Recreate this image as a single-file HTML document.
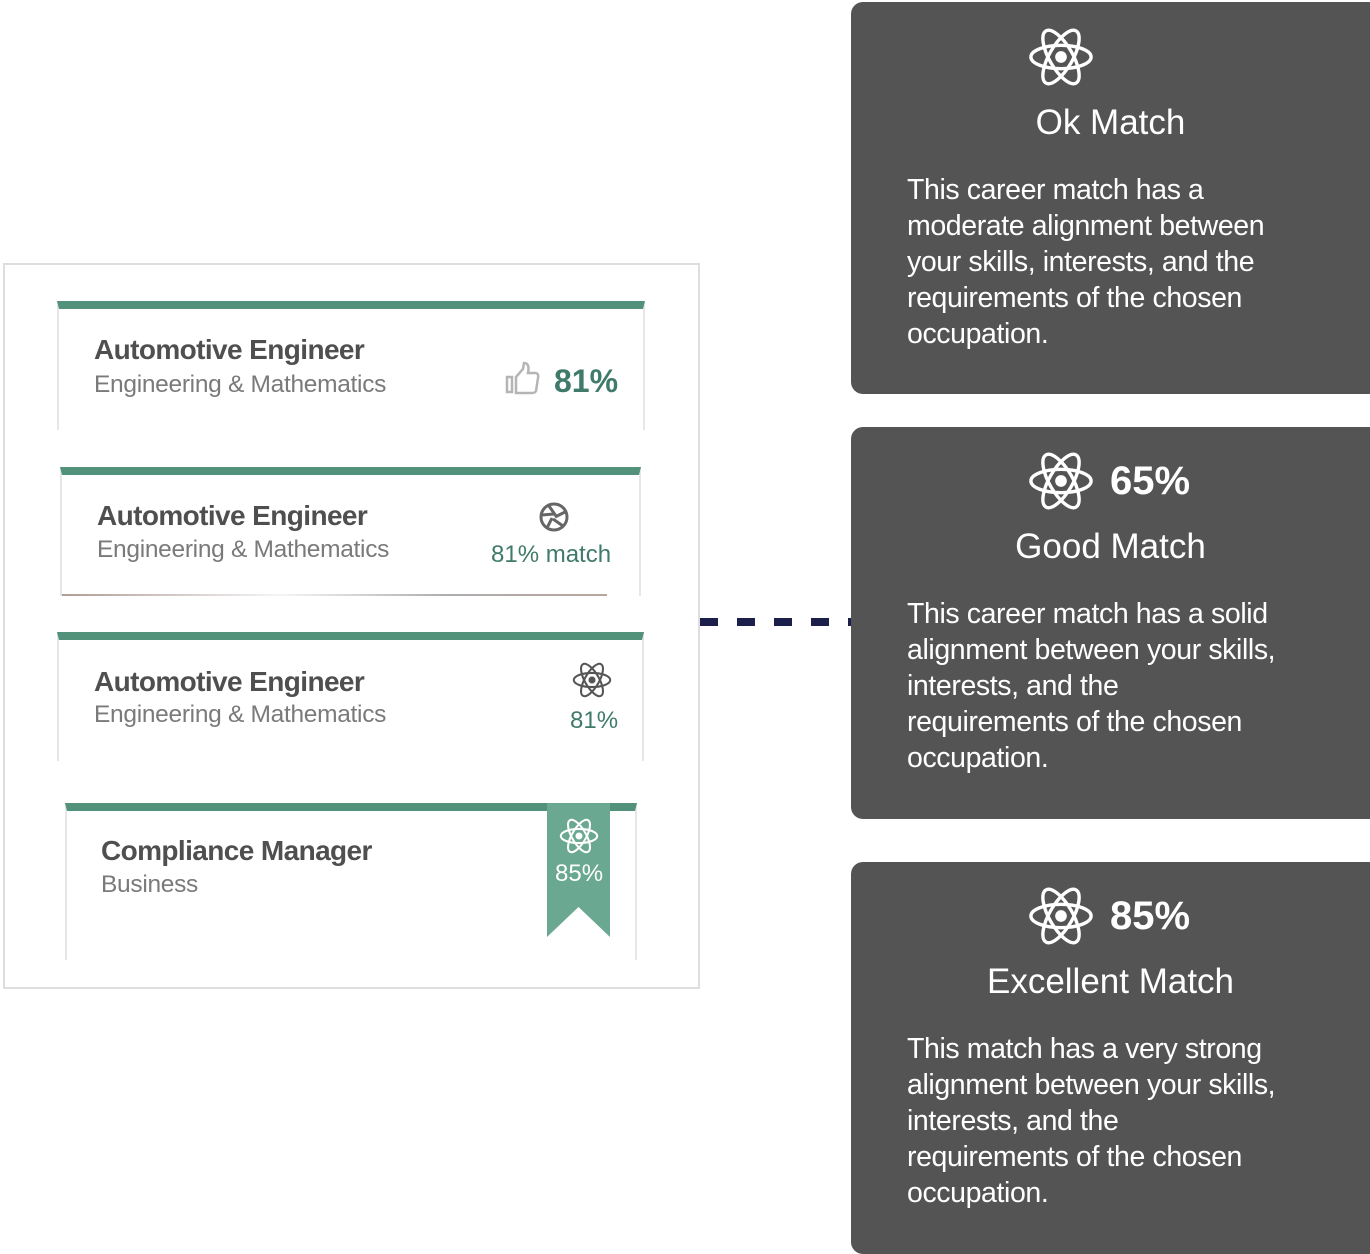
<!DOCTYPE html>
<html><head><meta charset="utf-8"><style>
*{margin:0;padding:0;box-sizing:border-box}
body{width:1370px;height:1253px;background:#fff;position:relative;overflow:hidden;font-family:"Liberation Sans",sans-serif}
.abs{position:absolute}
.panel{position:absolute;left:851px;width:530px;height:392px;background:#545454;border-radius:12px;color:#fff}
.ptitle{position:absolute;left:0;width:519px;text-align:center;font-size:35px;white-space:nowrap}
.pbody{position:absolute;left:56px;font-size:28.5px;line-height:36px;white-space:nowrap;letter-spacing:-0.4px}
.card{position:absolute;background:#fff;border-left:2px solid #e6e6e6;border-right:2px solid #e6e6e6;border-top:8px solid #52917a}
.t1{position:absolute;font-size:28px;color:#4f4f4f;white-space:nowrap;font-weight:bold;letter-spacing:-0.6px}
.t2{position:absolute;font-size:24.5px;color:#7a7a7a;white-space:nowrap;letter-spacing:-0.3px}
.g{color:#3f7a6a;position:absolute;white-space:nowrap}
</style></head><body>
<svg width="0" height="0" style="position:absolute">
<defs><symbol id="atom" viewBox="-34 -34 68 68">
<g fill="none" stroke="currentColor" stroke-width="3.5">
<ellipse rx="31" ry="12"/><ellipse rx="31" ry="12" transform="rotate(60)"/><ellipse rx="31" ry="12" transform="rotate(120)"/></g>
<circle r="6" fill="currentColor"/></symbol></defs></svg>

<div class="abs" style="left:3px;top:263px;width:697px;height:726px;border:2px solid #dedede"></div>

<div class="card" style="left:57px;top:301px;width:588px;height:129px">
<div class="t1" style="left:35px;top:25px">Automotive Engineer</div>
<div class="t2" style="left:35px;top:62px">Engineering &amp; Mathematics</div>
<svg class="abs" style="left:446px;top:52px" width="36" height="36" viewBox="0 0 36 36"><g fill="none" stroke="#b5b5b5" stroke-width="2.5"><rect x="2" y="16" width="5" height="15"/><path d="M11 16 L18 8 L19 2 Q25 2 23 12 L31 12 Q34 13 33 17 L31 30 Q30 32 27 32 L11 32 Z"/></g></svg>
<div class="g" style="left:495px;top:54px;font-size:32px;font-weight:bold">81%</div>
</div>

<div class="card" style="left:60px;top:467px;width:581px;height:129px">
<div class="t1" style="left:35px;top:25px">Automotive Engineer</div>
<div class="t2" style="left:35px;top:61px">Engineering &amp; Mathematics</div>
<svg class="abs" style="left:476px;top:26px" width="32" height="32" viewBox="0 0 32 32"><g fill="none" stroke="#666" stroke-width="3"><circle cx="16" cy="16" r="13"/><path d="M11 5 L18 15 M27 11 L17 16 M25 25 L15 18 M9 27 L14 17 M4 14 L16 13"/></g></svg>
<div class="g" style="left:429px;top:66px;font-size:24px">81% match</div>
</div>
<div class="abs" style="left:62px;top:594px;width:545px;height:2px;opacity:.6;background:linear-gradient(90deg,#7a5a50,#eee 40%,#777 70%,#8a6a60)"></div>

<div class="card" style="left:57px;top:632px;width:587px;height:129px">
<div class="t1" style="left:35px;top:26px">Automotive Engineer</div>
<div class="t2" style="left:35px;top:61px">Engineering &amp; Mathematics</div>
<svg class="abs" style="left:513px;top:20px;color:#555" width="40" height="40"><use href="#atom"/></svg>
<div class="g" style="left:511px;top:67px;font-size:24px">81%</div>
</div>

<div class="card" style="left:65px;top:803px;width:572px;height:157px">
<div class="t1" style="left:34px;top:24px">Compliance Manager</div>
<div class="t2" style="left:34px;top:60px">Business</div>
</div>
<svg class="abs" style="left:547px;top:803px" width="64" height="135" viewBox="0 0 64 135"><path d="M0 0 H63 V134 L31.5 104 L0 134 Z" fill="#6aa891"/></svg>
<svg class="abs" style="left:559px;top:816px;color:#fff" width="40" height="40"><use href="#atom"/></svg>
<div class="abs" style="left:555px;top:860px;font-size:24px;color:#fff">85%</div>

<div class="abs" style="left:700px;top:618px;width:151px;height:8px;background:repeating-linear-gradient(90deg,#1b1f4a 0 18px,transparent 18px 37px)"></div>

<div class="panel" style="top:2px">
<svg class="abs" style="left:177px;top:22px;color:#fff" width="66" height="66"><use href="#atom"/></svg>
<div class="ptitle" style="top:101px">Ok Match</div>
<div class="pbody" style="top:170px">This career match has a<br>moderate alignment between<br>your skills, interests, and the<br>requirements of the chosen<br>occupation.</div>
</div>
<div class="panel" style="top:427px">
<svg class="abs" style="left:177px;top:21px;color:#fff" width="66" height="66"><use href="#atom"/></svg>
<div class="abs" style="left:259px;top:32px;font-size:40px;font-weight:bold">65%</div>
<div class="ptitle" style="top:100px">Good Match</div>
<div class="pbody" style="top:169px">This career match has a solid<br>alignment between your skills,<br>interests, and the<br>requirements of the chosen<br>occupation.</div>
</div>
<div class="panel" style="top:862px">
<svg class="abs" style="left:177px;top:21px;color:#fff" width="66" height="66"><use href="#atom"/></svg>
<div class="abs" style="left:259px;top:32px;font-size:40px;font-weight:bold">85%</div>
<div class="ptitle" style="top:100px">Excellent Match</div>
<div class="pbody" style="top:169px">This match has a very strong<br>alignment between your skills,<br>interests, and the<br>requirements of the chosen<br>occupation.</div>
</div>
</body></html>
